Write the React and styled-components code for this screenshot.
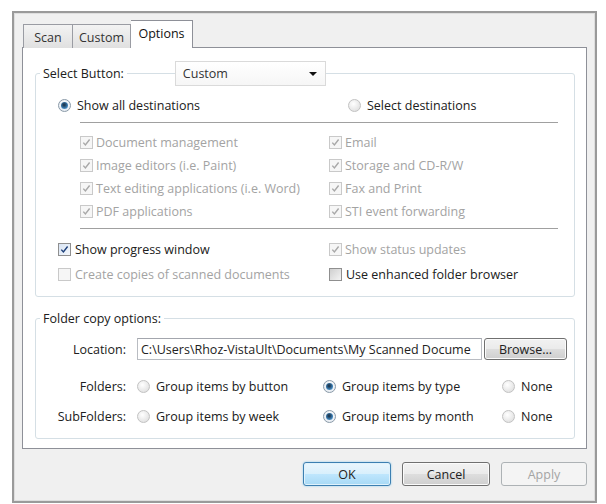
import React from 'react';
import styled, { createGlobalStyle, css } from 'styled-components';

const GlobalStyle = createGlobalStyle`
    html, body{
        margin: 0;
        padding: 0;
        background: #ffffff;
    }
    body{
        font-family: "Open Sans", "Noto Sans", Arial, sans-serif;
        font-size: 12.5px;
        color: #202020;
    }
`;

const Page = styled.div`
    padding: 11px 0 0 12px;
`;

const Window = styled.div`
    box-sizing: border-box;
    width: 585px;
    height: 492px;
    padding: 8px;
    background: #f0f0f0;
    border: 2px solid #9a9a9a;
    box-shadow: inset 0 0 0 1px #dedede;
    display: flex;
    flex-direction: column;
`;

const TabStrip = styled.div`
    display: flex;
    align-items: flex-end;
    height: 26px;
    padding-left: 1px;
    position: relative;
    z-index: 2;
`;

const Tab = styled.div`
    box-sizing: border-box;
    width: ${p => p.$w}px;
    height: 24px;
    margin-bottom: -1px;
    display: flex;
    align-items: center;
    justify-content: center;
    border: 1px solid #9a9ca3;
    border-bottom: none;
    background: linear-gradient(#f3f3f3, #e0e0e0);
    color: #333;
    padding-top: 1px;
    & + &{
        border-left: none;
    }
    ${p => p.$active && css`
        height: 28px;
        background: #ffffff;
        border: 1px solid #8e9098;
        border-bottom: none;
        padding-bottom: 4px;
        color: #111;
    `}
`;

const Panel = styled.div`
    box-sizing: border-box;
    height: 402px;
    background: #ffffff;
    border: 1px solid #8e9098;
    padding: 13px 11px 0 12px;
    display: flex;
    flex-direction: column;
    gap: 13px;
`;

const Group = styled.fieldset`
    margin: 0;
    padding: 0;
    border: 1px solid #d5dfe5;
    border-radius: 3px;
    min-width: 0;
`;

const Legend = styled.legend`
    margin-left: 4px;
    padding: 0;
    display: flex;
    align-items: center;
`;

const LegendText = styled.span`
    padding: 0 3px;
    color: #202020;
`;

const LegendRule = styled.span`
    width: 48px;
    height: 1px;
    background: #d5dfe5;
`;

const Combo = styled.div`
    box-sizing: border-box;
    width: 151px;
    height: 25px;
    display: flex;
    align-items: center;
    justify-content: space-between;
    padding: 0 8px 0 7px;
    border: 1px solid #dadada;
    background: linear-gradient(#ffffff, #f6f6f6);
    color: #333;
`;

const Arrow = styled.span`
    width: 0;
    height: 0;
    border-left: 4px solid transparent;
    border-right: 4px solid transparent;
    border-top: 4px solid #111;
`;

const GroupBody = styled.div`
    padding: ${p => p.$pad};
    display: flex;
    flex-direction: column;
`;

const Row = styled.div`
    display: flex;
    align-items: center;
    height: ${p => p.$h || 18}px;
    margin-top: ${p => p.$mt || 0}px;
`;

const Rule = styled.div`
    height: 1px;
    background: #a0a0a0;
    margin: ${p => p.$m};
`;

const OptionGrid = styled.div`
    display: grid;
    grid-template-columns: ${p => p.$cols};
    grid-auto-rows: ${p => p.$rowH}px;
    margin: ${p => p.$m};
`;

const Option = styled.label`
    display: flex;
    align-items: center;
    gap: ${p => p.$gap || 4}px;
    white-space: nowrap;
    width: ${p => (p.$w ? `${p.$w}px` : 'auto')};
    color: ${p => (p.$disabled ? '#a3a3a3' : '#202020')};
`;

const Box = styled.span`
    box-sizing: border-box;
    flex: none;
    width: 13px;
    height: 13px;
    display: flex;
    align-items: center;
    justify-content: center;
    border: 1px solid ${p => (p.$disabled ? '#c9c9c9' : '#8f8f8f')};
    background: ${p => (p.$disabled
        ? '#f6f6f6'
        : p.$checked
            ? 'linear-gradient(135deg, #d8e4f4, #f4f7fb)'
            : 'linear-gradient(135deg, #cfcfcf, #f4f4f4)')};
`;

const Round = styled.span`
    box-sizing: border-box;
    flex: none;
    width: 13px;
    height: 13px;
    border-radius: 50%;
    display: flex;
    align-items: center;
    justify-content: center;
    border: 1px solid ${p => (p.$checked ? '#8a9aa8' : '#c2c2c2')};
    background: ${p => (p.$checked
        ? 'radial-gradient(circle at 50% 40%, #ffffff, #dfe6ee)'
        : 'radial-gradient(circle at 40% 35%, #ffffff, #d9d9d9)')};
    &::after{
        content: '';
        display: ${p => (p.$checked ? 'block' : 'none')};
        width: 7px;
        height: 7px;
        border-radius: 50%;
        background: radial-gradient(circle at 45% 40%, #1f3c56 15%, #3c7fb5 60%, #8cc0e6);
    }
`;

const Check = ({ color }) => (
    <svg width="9" height="9" viewBox="0 0 9 9">
        <path d="M1.3 4.6 L3.4 7 L7.6 1.5" fill="none" stroke={color} strokeWidth="1.4" />
    </svg>
);

const CheckOption = ({ label, checked, disabled, w, gap }) => (
    <Option $disabled={disabled} $w={w} $gap={gap}>
        <Box $checked={checked} $disabled={disabled}>
            {checked && <Check color={disabled ? '#a8a8a8' : '#1c3f7a'} />}
        </Box>
        {label}
    </Option>
);

const RadioOption = ({ label, checked, w }) => (
    <Option $w={w} $gap={6}>
        <Round $checked={checked} />
        {label}
    </Option>
);

const FieldLabel = styled.span`
    box-sizing: border-box;
    width: 101px;
    flex: none;
    padding-right: 11px;
    color: #202020;
    display: flex;
    align-items: center;
    justify-content: flex-end;
`;

const FolderGrid = styled.div`
    display: grid;
    grid-template-columns: 101px 186px 179px 1fr;
    grid-auto-rows: 30px;
    align-items: center;
`;

const LocationRow = styled.div`
    display: flex;
    align-items: center;
    height: 22px;
    margin: 11px 0 11px 0;
`;

const PathInput = styled.div`
    box-sizing: border-box;
    width: 345px;
    height: 22px;
    margin-right: 2px;
    padding: 0 3px;
    display: flex;
    align-items: center;
    overflow: hidden;
    white-space: nowrap;
    border: 1px solid #b9bcc2;
    border-top-color: #a3a6ad;
    background: #ffffff;
    color: #222;
`;

const Button = styled.div`
    box-sizing: border-box;
    width: ${p => p.$w}px;
    height: ${p => p.$h || 24}px;
    display: flex;
    align-items: center;
    justify-content: center;
    border-radius: 3px;
    border: 1px solid #707070;
    background: linear-gradient(#f2f2f2 0%, #ebebeb 48%, #dddddd 52%, #cfcfcf 100%);
    box-shadow: inset 0 0 0 1px #fbfbfb;
    color: #222;
    ${p => p.$default && css`
        border-color: #3c7fb1;
        background: linear-gradient(#eaf6fd 0%, #d9f0fc 48%, #bee6fd 52%, #a7d9f5 100%);
        box-shadow: inset 0 0 0 1px #dff2fc, 0 0 2px #7fc4ea;
    `}
    ${p => p.$disabled && css`
        border-color: #adb2b5;
        background: #f4f4f4;
        box-shadow: none;
        color: #a4a4a4;
    `}
`;

const ButtonBar = styled.div`
    display: flex;
    justify-content: flex-end;
    gap: 11px;
    margin-top: 13px;
`;

const destinationsLeft = [
    'Document management',
    'Image editors (i.e. Paint)',
    'Text editing applications (i.e. Word)',
    'PDF applications',
];

const destinationsRight = [
    'Email',
    'Storage and CD-R/W',
    'Fax and Print',
    'STI event forwarding',
];

export default function App() {
    return (
        <>
            <GlobalStyle />
            <Page>
                <Window>
                    <TabStrip>
                        <Tab $w={50}>Scan</Tab>
                        <Tab $w={58}>Custom</Tab>
                        <Tab $w={62} $active>Options</Tab>
                    </TabStrip>
                    <Panel>
                        <Group>
                            <Legend>
                                <LegendText>Select Button:</LegendText>
                                <LegendRule />
                                <Combo>
                                    Custom
                                    <Arrow />
                                </Combo>
                            </Legend>
                            <GroupBody $pad="10px 16px 9px 22px">
                                <Row>
                                    <RadioOption label="Show all destinations" checked w={290} />
                                    <RadioOption label="Select destinations" />
                                </Row>
                                <Rule $m="8px 0 0 22px" />
                                <OptionGrid $cols="249px 1fr" $rowH={23} $m="8px 0 0 22px">
                                    {destinationsLeft.map((d, i) => (
                                        <React.Fragment key={d}>
                                            <CheckOption label={d} checked disabled gap={3} />
                                            <CheckOption label={destinationsRight[i]} checked disabled gap={3} />
                                        </React.Fragment>
                                    ))}
                                </OptionGrid>
                                <Rule $m="5px 0 0 22px" />
                                <OptionGrid $cols="271px 1fr" $rowH={25} $m="8px 0 0 0">
                                    <CheckOption label="Show progress window" checked />
                                    <CheckOption label="Show status updates" checked disabled gap={3} />
                                    <CheckOption label="Create copies of scanned documents" disabled />
                                    <CheckOption label="Use enhanced folder browser" />
                                </OptionGrid>
                            </GroupBody>
                        </Group>
                        <Group>
                            <Legend>
                                <LegendText>Folder copy options:</LegendText>
                            </Legend>
                            <GroupBody $pad="0 0 7px 0">
                                <LocationRow>
                                    <FieldLabel>Location:</FieldLabel>
                                    <PathInput>C:\Users\Rhoz-VistaUlt\Documents\My Scanned Docume</PathInput>
                                    <Button $w={83} $h={22}>Browse...</Button>
                                </LocationRow>
                                <FolderGrid>
                                    <FieldLabel>Folders:</FieldLabel>
                                    <RadioOption label="Group items by button" />
                                    <RadioOption label="Group items by type" checked />
                                    <RadioOption label="None" />
                                    <FieldLabel>SubFolders:</FieldLabel>
                                    <RadioOption label="Group items by week" />
                                    <RadioOption label="Group items by month" checked />
                                    <RadioOption label="None" />
                                </FolderGrid>
                            </GroupBody>
                        </Group>
                    </Panel>
                    <ButtonBar>
                        <Button $w={88} $default>OK</Button>
                        <Button $w={88}>Cancel</Button>
                        <Button $w={86} $disabled>Apply</Button>
                    </ButtonBar>
                </Window>
            </Page>
        </>
    );
}
